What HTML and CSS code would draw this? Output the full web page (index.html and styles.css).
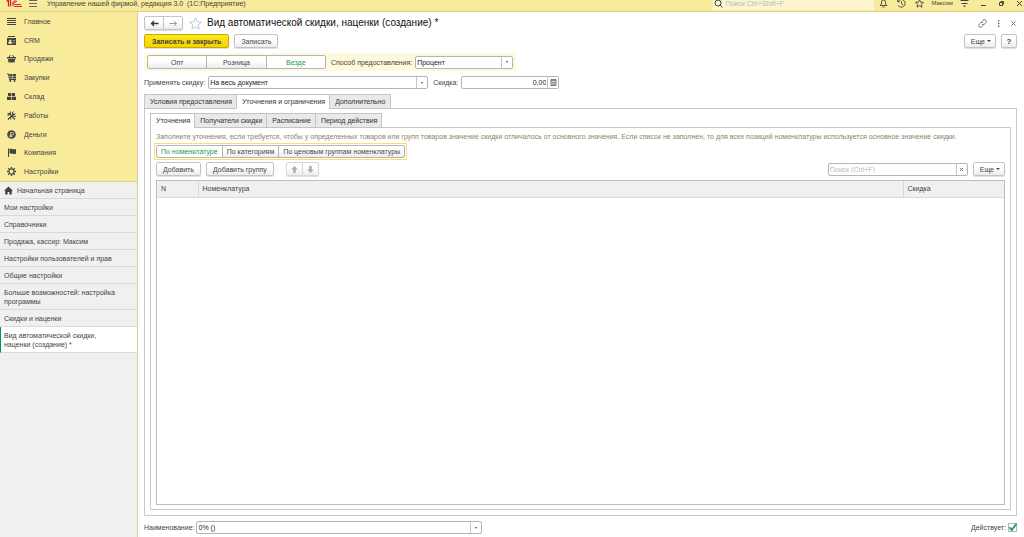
FILE: index.html
```html
<!DOCTYPE html>
<html lang="ru">
<head>
<meta charset="utf-8">
<title>Управление нашей фирмой, редакция 3.0</title>
<link rel="stylesheet" href="styles.css">
</head>
<body>
<header class="topbar">
  <div class="topbar-row">
    <svg class="logo" viewBox="0 0 16 9" fill="none" stroke="#d9232b"><path d="M.5 2.500 2.500 1v6.500M4.500 0v7.500" stroke-width="1.300"/><path d="M11 2.500A2.800 2.800 0 1 0 8.800 7.500H16M9.800 3.300A1.300 1.300 0 1 0 8.800 5.600H15"/></svg>
    <button class="bare" aria-label="Меню"><svg class="i9" viewBox="0 0 9 9" stroke="#666"><path d="M1 1.500h8M1 4.500h8M1 7.500h8"/></svg></button>
    <span class="app-name">Управление нашей фирмой, редакция 3.0&nbsp; (1С:Предприятие)</span>
    <label class="global-search"><svg class="i9" viewBox="0 0 9 9" fill="none" stroke="#444"><circle cx="4" cy="4" r="3"/><path d="m6 6 2.500 2.500"/></svg><input type="text" aria-label="Поиск" placeholder="Поиск Ctrl+Shift+F"></label>
    <div class="top-tools">
      <button class="bare" aria-label="Уведомления"><svg class="i9" viewBox="0 0 9 9" fill="none" stroke="#444" stroke-width=".9"><path d="M1 6.500h7L6.500 5V3a2 2 0 0 0-4 0v2zM3.500 8h2"/></svg></button>
      <button class="bare" aria-label="История"><svg class="i9" viewBox="0 0 9 9" fill="none" stroke="#444" stroke-width=".9"><path d="M1 2.500A3.800 3.800 0 1 1 1 6.200M.7.600v2.200h2.200M4.500 2.300v2.500l1.700 1"/></svg></button>
      <button class="bare" aria-label="Избранное"><svg class="i9" viewBox="0 0 9 9" fill="none" stroke="#444" stroke-width=".9"><path d="m4.500.6 1.100 2.600 2.900.2-2.200 1.900.7 2.900-2.500-1.600L2 8.200l.7-2.900L.5 3.400l2.900-.2z"/></svg></button>
      <a class="user" href="#user">Максим</a>
      <button class="bare" aria-label="Настройка"><svg class="i9" viewBox="0 0 9 9"><path d="M.5 1.500h8M1.500 4.500h6" stroke="#444"/><path d="M3 6.500h3L4.500 8.300z" fill="#444"/></svg></button>
      <button class="bare win" aria-label="Свернуть"><svg class="i7" viewBox="0 0 7 7"><path d="M1 5.500h5" stroke="#444"/></svg></button>
      <button class="bare win" aria-label="Восстановить"><svg class="i7" viewBox="0 0 7 7" fill="none" stroke="#444"><path d="M1.500 2.500h3v3h-3zM2.500 1.500h3v3"/></svg></button>
      <button class="bare win" aria-label="Закрыть"><svg class="i7" viewBox="0 0 7 7" stroke="#444"><path d="m1 1 5 5M6 1 1 6"/></svg></button>
    </div>
  </div>
</header>
<div class="shell">
  <aside class="sidebar">
    <nav class="sections">
      <a href="#main"><svg viewBox="0 0 9 9" stroke="#444"><path d="M0 1.500h9M0 3.500h9M0 5.500h9M0 7.500h9"/></svg>Главное</a>
      <a href="#crm"><svg viewBox="0 0 9 9"><path d="M1 0h7v1H1zM0 2h9v7H0z" fill="#444"/><path d="M1.500 7.500v-1l1-.8a1 1 0 1 1 1.300 0l1 .8v1zM5.500 4.500H8M5.500 6.500H8" fill="#f9eb9c" stroke="#f9eb9c" stroke-width=".5"/></svg>CRM</a>
      <a href="#sales"><svg viewBox="0 0 9 9"><path d="M0 3h9v1.500H0zM1 5h7.200L7.500 8.500h-6z" fill="#444"/><path d="m2 3 1.500-2M7 3 5.500 1" stroke="#444"/></svg>Продажи</a>
      <a href="#purchases"><svg viewBox="0 0 9 9"><path d="M0 .8h1.500l1 5.700H9" fill="none" stroke="#444"/><path d="M2.200 1H5v2H2.500zM5.500 1H9v2H5.500zM2.600 3.500H5v2H3zM5.500 3.500H9v2H5.500z" fill="#444"/><circle cx="3.300" cy="8" r="1" fill="#444"/><circle cx="7.500" cy="8" r="1" fill="#444"/></svg>Закупки</a>
      <a href="#stock"><svg viewBox="0 0 9 9" fill="#444"><path d="M1 1h3.200v3H1zM4.800 1H8v3H4.800zM0 4.700h4.200V8H0zM4.800 4.700H9V8H4.800z"/></svg>Склад</a>
      <a href="#works"><svg viewBox="0 0 9 9" fill="none" stroke="#444"><path d="m1 8.500 6-6M.5 2.500 3 3l5 5.500M3.500.5 3 3 .5 4.500" stroke-width="1.200"/><path d="M8.500 2.500 7 4 5 2 6.500.5M4.500 4.500 9 5.500M3.500 5.500 4 8.500"/></svg>Работы</a>
      <a href="#money"><svg viewBox="0 0 9 9"><circle cx="4.500" cy="4.500" r="4.300" fill="#444"/><path d="M3.700 7.500V2.500h1.600a1.300 1.300 0 0 1 0 2.600H2.500M2.500 6.300h3" fill="none" stroke="#f9eb9c" stroke-width=".8"/></svg>Деньги</a>
      <a href="#company"><svg viewBox="0 0 9 9"><path d="M1.500.5v8.500" stroke="#444"/><path d="M2.500 1c2-.8 3 .9 6.500 0v4.700c-3 .9-4.500-.8-6.500 0z" fill="#444"/></svg>Компания</a>
      <a href="#settings"><svg viewBox="0 0 9 9" fill="none" stroke="#444"><circle cx="4.500" cy="4.500" r="2.600" stroke-width="1.200"/><path d="M4.500 0v1.500M4.500 7.500V9M0 4.500h1.500M7.500 4.500H9M1.300 1.300l1.100 1.100M6.600 6.600l1.100 1.100M7.700 1.300 6.600 2.400M2.400 6.600 1.300 7.700" stroke-width="1.300"/></svg>Настройки</a>
    </nav>
    <nav class="windows">
      <a href="#home" class="home"><svg viewBox="0 0 9 9" fill="#444"><path d="M4.500.5 9 4.700H7.800v3.800H5.400V6H3.600v2.500H1.200V4.700H0z"/></svg>Начальная страница</a>
      <a href="#my">Мои настройки</a>
      <a href="#ref">Справочники</a>
      <a href="#sale">Продажа, кассир: Максим</a>
      <a href="#users">Настройки пользователей и прав</a>
      <a href="#common">Общие настройки</a>
      <a href="#more">Больше возможностей: настройка программы</a>
      <a href="#discounts">Скидки и наценки</a>
      <a href="#new" class="current">Вид автоматической скидки, наценки (создание) *</a>
    </nav>
  </aside>
  <main class="page">
    <div class="title-row">
      <div class="pair">
        <button class="btn" aria-label="Назад"><svg class="i9" viewBox="0 0 9 9"><path d="M1.500 4.500h7M4 2 1.500 4.500 4 7" fill="none" stroke="#333" stroke-width="1.300"/></svg></button>
        <button class="btn" aria-label="Вперед"><svg class="i9" viewBox="0 0 9 9"><path d="M.5 4.500h7M5 2l2.500 2.500L5 7" fill="none" stroke="#999"/></svg></button>
      </div>
      <svg class="star" viewBox="0 0 13 13" fill="none" stroke="#b4bcc4" stroke-width=".8"><path d="m6.500.8 1.600 4 4.300.3-3.300 2.800 1 4.300-3.600-2.400-3.600 2.400 1-4.300L.6 5.100l4.300-.3z"/></svg>
      <h1>Вид автоматической скидки, наценки (создание) *</h1>
      <div class="page-tools">
        <button class="bare" aria-label="Ссылка"><svg class="i9" viewBox="0 0 9 9" fill="none" stroke="#666" stroke-width=".9"><path d="M3.800 2.600 5.200 1.200a1.800 1.800 0 0 1 2.600 2.600L6.400 5.200a1.800 1.800 0 0 1-2.500 0M5.200 6.400 3.800 7.800a1.800 1.800 0 0 1-2.600-2.600l1.400-1.400a1.800 1.800 0 0 1 2.500 0"/></svg></button>
        <button class="bare" aria-label="Действия"><svg class="i7" viewBox="0 0 7 7" fill="#555"><path d="M3 0h1.300v1.300H3zM3 2.800h1.300v1.300H3zM3 5.600h1.300v1.300H3z"/></svg></button>
        <button class="bare" aria-label="Закрыть форму"><svg class="i7" viewBox="0 0 7 7" stroke="#777"><path d="m1.500 1.500 4 4M5.500 1.500l-4 4"/></svg></button>
      </div>
    </div>
    <div class="command-row">
      <button class="btn primary">Записать и закрыть</button>
      <button class="btn">Записать</button>
      <button class="btn more push">Еще <i class="caret"></i></button>
      <button class="btn help">?</button>
    </div>
    <div class="mode-row">
      <div class="segments wide">
        <button class="btn">Опт</button><button class="btn">Розница</button><button class="btn on">Везде</button>
      </div>
      <label for="method" class="second">Способ предоставления:</label>
      <div class="field method"><select id="method"><option>Процент</option></select><span class="drop"><i class="caret"></i></span></div>
    </div>
    <div class="apply-row">
      <label for="apply">Применять скидку:</label>
      <div class="field apply"><select id="apply"><option>На весь документ</option></select><span class="drop"><i class="caret"></i></span></div>
      <label for="amount" class="second">Скидка:</label>
      <div class="field amount"><input id="amount" type="text" value="0,00"><button class="drop" aria-label="Калькулятор"><svg class="i7" viewBox="0 0 7 7"><path d="M1 .5h5v6H1z" fill="#ddd" stroke="#777"/><path d="M1 1.500h5M2 3.500h3M2 5h3" stroke="#777" stroke-width=".8"/></svg></button></div>
    </div>
    <div class="tabs outer" role="tablist">
      <button role="tab">Условия предоставления</button><button role="tab" class="on" aria-selected="true">Уточнения и ограничения</button><button role="tab">Дополнительно</button>
    </div>
    <section class="panel">
      <div class="tabs" role="tablist">
        <button role="tab" class="on" aria-selected="true">Уточнения</button><button role="tab">Получатели скидки</button><button role="tab">Расписание</button><button role="tab">Период действия</button>
      </div>
      <section class="panel inner">
        <p class="hint">Заполните уточнения, если требуется, чтобы у определенных товаров или групп товаров значение скидки отличалось от основного значения. Если список не заполнен, то для всех позиций номенклатуры используется основное значение скидки.</p>
        <div class="segments framed">
          <button class="btn on">По номенклатуре</button><button class="btn">По категориям</button><button class="btn">По ценовым группам номенклатуры</button>
        </div>
        <div class="list-tools">
          <button class="btn">Добавить</button>
          <button class="btn">Добавить группу</button>
          <div class="pair arrows">
            <button class="btn" aria-label="Вверх"><svg class="i7" viewBox="0 0 7 7" fill="#a3abb2"><path d="M3.500 0 6.700 3.500H4.700V7H2.300V3.500H.3z"/></svg></button>
            <button class="btn" aria-label="Вниз"><svg class="i7" viewBox="0 0 7 7" fill="#a3abb2"><path d="M3.500 7 .3 3.500h2V0h2.400v3.500h2z"/></svg></button>
          </div>
          <div class="field find push"><input type="text" aria-label="Поиск в списке" placeholder="Поиск (Ctrl+F)"><button class="drop" aria-label="Очистить"><svg class="i5" viewBox="0 0 5 5" stroke="#777"><path d="m1 1 3 3M4 1 1 4"/></svg></button></div>
          <button class="btn more">Еще <i class="caret"></i></button>
        </div>
        <div class="list">
          <table>
            <colgroup><col class="c-n"><col><col class="c-d"></colgroup>
            <thead><tr><th>N</th><th>Номенклатура</th><th>Скидка</th></tr></thead>
            <tbody></tbody>
          </table>
        </div>
      </section>
    </section>
    <footer class="footer-row">
      <label for="name">Наименование:</label>
      <div class="field name"><input id="name" type="text" value="0% ()"><button class="drop" aria-label="Выбрать"><i class="caret"></i></button></div>
      <label for="active" class="push">Действует:</label>
      <span class="check"><input id="active" type="checkbox" checked><svg viewBox="0 0 9 9" fill="none" stroke="#10a04b" stroke-width="1.800"><path d="M1.500 4.200 3.700 7 8.500.8"/></svg></span>
    </footer>
  </main>
</div>
</body>
</html>
```
FILE: styles.css
```css
* { box-sizing: border-box; }
body {
  margin: 0;
  height: 100vh;
  display: flex;
  flex-direction: column;
  overflow: hidden;
  font: 7px/9px "Liberation Sans", Arial, sans-serif;
  color: #444;
  background: #fff;
}
button, input, select { font: inherit; color: inherit; margin: 0; padding: 0; }
a { color: inherit; text-decoration: none; }
svg { display: block; flex: none; }
.i9 { width: 9px; height: 9px; }
.i7 { width: 7px; height: 7px; }
.i5 { width: 5px; height: 5px; }
.push { margin-left: auto; }
.bare { border: 0; background: none; display: flex; }

.topbar {
  flex: none;
  height: 12px;
  display: flex;
  align-items: flex-end;
  overflow: hidden;
  background: #f9eb9c;
  border-bottom: 1px solid #dccf8b;
}
.topbar-row { flex: 1; height: 15px; display: flex; align-items: center; padding: 0 1px 0 6px; }
.logo { width: 16px; height: 9px; margin-right: 6px; }
.app-name { margin-left: 10px; white-space: nowrap; }
.global-search {
  width: 161px;
  height: 13px;
  margin-left: auto;
  display: flex;
  align-items: center;
  gap: 2px;
  padding-left: 1px;
  background: #fdf5d0;
}
.global-search input { flex: 1; min-width: 0; border: 0; background: none; outline: 0; }
::placeholder { color: #bbb; opacity: 1; }
.top-tools { display: flex; align-items: center; gap: 9px; margin-left: 5px; }
.user { font-size: 6px; margin: 0 -2px; }
.win { margin-left: 2px; }

.shell { flex: 1; min-height: 0; display: flex; }
.sidebar { width: 138px; flex: none; background: #f0f0f0; border-right: 1px solid #d8cf9a; }
.sections {
  height: 170px;
  display: grid;
  grid-auto-rows: 1fr;
  background: #f9eb9c;
  border-bottom: 1px solid #dccf8b;
}
.sections a { display: flex; align-items: center; gap: 8px; padding-left: 7px; }
.sections svg, .home svg { width: 9px; height: 9px; }
.windows a { display: block; padding: 4px 20px 3px 4px; border-bottom: 1px solid #d9d9d9; }
.windows .home { display: flex; gap: 4px; }
.windows .current { background: #fff; border-left: 1px solid #00984a; padding-left: 3px; }
.windows .current { padding-right: 32px; }

.page {
  flex: 1;
  min-width: 0;
  display: flex;
  flex-direction: column;
  padding: 4px 7px 3px 6px;
}
.btn {
  height: 14px;
  display: flex;
  align-items: center;
  justify-content: center;
  padding: 0 6px;
  border: 1px solid #c4c4c4;
  border-radius: 2px;
  background: linear-gradient(#fff 40%, #ececec);
  box-shadow: 0 1px 1px #ddd;
  white-space: nowrap;
}
.caret {
  width: 0;
  height: 0;
  border: 2px solid transparent;
  border-top-color: #444;
  border-bottom: 0;
}
.pair { display: flex; }
.pair .btn { width: 20px; padding: 0; }
.pair .btn:first-child, .segments .btn:not(:last-child) { border-top-right-radius: 0; border-bottom-right-radius: 0; }
.pair .btn + .btn, .segments .btn + .btn { margin-left: -1px; border-top-left-radius: 0; border-bottom-left-radius: 0; }

.title-row { display: flex; align-items: center; height: 14px; }
.star { width: 13px; height: 13px; margin: 0 5px 0 6px; }
h1 { margin: 0; font-size: 10px; line-height: 14px; font-weight: 400; color: #111; white-space: nowrap; }
.page-tools { margin-left: auto; display: flex; align-items: center; gap: 8px; }

.command-row { display: flex; gap: 5px; margin-top: 4px; }
.btn.primary { padding: 0 7px; font-weight: 700; border-color: #c9ab00; background: linear-gradient(#ffe81a, #f3d300); }
.btn.more { gap: 2px; padding: 0 4px 0 6px; }
.btn.help { width: 16px; padding: 0; font-size: 8px; font-weight: 700; }

.mode-row {
  align-self: flex-start;
  display: flex;
  align-items: center;
  gap: 3px;
  margin-top: 5px;
  padding: 2px 3px;
  background: #fff9dc;
}
.segments { display: flex; }
.segments .btn { border-color: #b5b5b5; box-shadow: none; }
.segments .on { color: #10a04b; background: #fff; }
.wide { width: 179px; }
.wide .btn { flex: 1; }

.field {
  height: 13px;
  display: grid;
  grid-template-columns: 1fr 11px;
  border: 1px solid #b5b5b5;
  border-radius: 2px;
  background: #fff;
  color: #222;
}
.field input, .field select { min-width: 0; border: 0; outline: 0; background: none; appearance: none; padding: 0 1px; }
.field select { grid-area: 1 / 1 / 2 / 3; }
.drop {
  grid-area: 1 / 2;
  display: flex;
  align-items: center;
  justify-content: center;
  border: 0;
  border-left: 1px solid #c4c4c4;
  background: none;
  pointer-events: none;
}
.drop .caret { border-width: 2px 1px 0; }
.method { width: 98px; }
.apply { width: 220px; }
.amount { width: 98px; }
.amount input { text-align: right; }
.name { width: 286px; }
.find { width: 140px; }

.apply-row { display: flex; align-items: center; gap: 3px; margin-top: 5px; }
.second { margin-left: 2px; }

.tabs { display: flex; margin-top: 4px; position: relative; z-index: 1; }
.outer { margin-top: 5px; }
.tabs button {
  height: 15px;
  padding: 0 4px 0 5px;
  border: 1px solid #c4c4c4;
  background: #e9e9e9;
  color: #333;
  white-space: nowrap;
}
.tabs button + button { margin-left: -1px; }
.tabs .on { background: #fff; border-bottom-color: #fff; }
.panel {
  flex: 1;
  min-height: 0;
  display: flex;
  flex-direction: column;
  margin-top: -1px;
  padding: 0 5px 5px;
  border: 1px solid #c9c9c9;
}
.panel:not(.inner) { position: relative; z-index: 0; }
.inner { padding-bottom: 4px; }

.hint { margin: 4px 0 2px; color: #8b8467; }
.framed { align-self: flex-start; margin-left: -2px; padding: 1px; border: 1px solid #ffdc70; }
.framed .btn { height: 13px; padding: 0 4px; }
.list-tools { display: flex; align-items: center; gap: 5px; margin-top: 2px; }
.arrows { margin-left: 7px; }
.arrows .btn { width: 17px; border-color: #d8d8d8; }
.list { flex: 1; margin-top: 4px; border: 1px solid #bdbdbd; }
table { width: 100%; border-collapse: collapse; table-layout: fixed; }
.c-n { width: 41px; }
.c-d { width: 101px; }
th {
  height: 16px;
  padding: 0 4px;
  text-align: left;
  font-weight: 400;
  background: #f0f0f0;
  border-right: 1px solid #d9d9d9;
  border-bottom: 1px solid #d9d9d9;
}
th:last-child { border-right: 0; }

.footer-row { display: flex; align-items: center; gap: 2px; margin-top: 5px; }
.check { display: grid; }
.check input, .check svg { grid-area: 1 / 1; width: 9px; height: 9px; }
.check input { appearance: none; border: 1px solid #b5b5b5; background: #fff; }
.check svg { pointer-events: none; }
```
